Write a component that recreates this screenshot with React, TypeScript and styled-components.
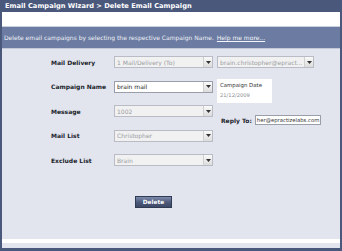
import styled, { createGlobalStyle } from 'styled-components';

const GlobalStyle = createGlobalStyle`
  html, body {
    margin: 0;
    padding: 0;
    background: #ffffff;
  }
  body {
    font-family: "DejaVu Sans", Verdana, sans-serif;
  }
`;

const Frame = styled.div`
  width: 342px;
  height: 251px;
  box-sizing: border-box;
  background: #4a587c;
  padding: 0 2px 3px;
  display: flex;
  flex-direction: column;
`;

const TitleBar = styled.div`
  height: 12px;
  padding-left: 3px;
  display: flex;
  align-items: center;
  color: #ffffff;
  font-size: 6.7px;
  font-weight: bold;
`;

const Strip = styled.div<{ h: number; color: string }>`
  height: ${({ h }) => h}px;
  flex: none;
  background: ${({ color }) => color};
`;

const InfoBand = styled.div`
  height: 21px;
  background: #6b7ba1;
  color: #eef1f8;
  font-size: 6px;
  padding-left: 2px;
  display: flex;
  align-items: center;
  gap: 3px;
`;

const HelpLink = styled.a`
  color: #f4f6fb;
  text-decoration: underline;
`;

const Panel = styled.div`
  height: 190px;
  flex: none;
  background: #e2e5ee;
  display: flex;
  flex-direction: column;
  padding-top: 7px;
  box-sizing: border-box;
`;

const FormGrid = styled.div`
  display: grid;
  grid-template-columns: 59px 99px 105px;
  grid-template-rows: repeat(5, 12px);
  column-gap: 4px;
  row-gap: 12.5px;
  margin-left: 49px;
`;

const Label = styled.div`
  font-size: 6px;
  font-weight: bold;
  color: #1a1e2a;
  display: flex;
  align-items: center;
  height: 12px;
  white-space: nowrap;
`;

const SelectBox = styled.div<{ disabled?: boolean; w?: number }>`
  width: ${({ w }) => (w ? `${w}px` : '100%')};
  height: 12px;
  box-sizing: border-box;
  border: 1px solid ${({ disabled }) => (disabled ? '#b9bcc4' : '#9a9ea8')};
  background: ${({ disabled }) => (disabled ? '#f1f1f2' : '#ffffff')};
  color: ${({ disabled }) => (disabled ? '#9a9ca2' : '#222222')};
  font-size: 6px;
  display: flex;
  align-items: center;
  padding-left: 2px;
  overflow: hidden;
  white-space: nowrap;
`;

const SelectText = styled.span`
  flex: 1;
  overflow: hidden;
`;

const ArrowButton = styled.span`
  width: 8px;
  height: 10px;
  flex: none;
  background: linear-gradient(#fafafa, #dcdcdc);
  border-left: 1px solid #d0d0d0;
  display: flex;
  align-items: center;
  justify-content: center;
  svg {
    display: block;
  }
`;

const DateBox = styled.div`
  width: 55px;
  height: 24px;
  margin-top: -2px;
  background: #ffffff;
  box-sizing: border-box;
  padding: 3px 0 0 3px;
  display: flex;
  flex-direction: column;
  gap: 4px;
`;

const DateLabel = styled.span`
  font-size: 5.4px;
  color: #333333;
  white-space: nowrap;
`;

const DateValue = styled.span`
  font-size: 5.2px;
  color: #8a8c92;
`;

const ReplyRow = styled.div`
  grid-column: 3;
  grid-row: 3;
  margin-top: 10px;
  margin-left: 4px;
  display: flex;
  align-items: center;
  gap: 3px;
  height: 10px;
  white-space: nowrap;
`;

const ReplyLabel = styled.span`
  flex: none;
  font-size: 6px;
  font-weight: bold;
  color: #1a1e2a;
`;

const TextInput = styled.div`
  flex: none;
  width: 66px;
  height: 10px;
  box-sizing: border-box;
  border: 1px solid #9a9ea8;
  background: #ffffff;
  font-size: 5.3px;
  color: #333333;
  display: flex;
  align-items: center;
  padding-left: 1px;
  overflow: hidden;
`;

const ButtonRow = styled.div`
  margin-top: 23px;
  padding-left: 133px;
`;

const DeleteButton = styled.button`
  width: 37px;
  height: 12px;
  padding: 0;
  border: 1px solid #2f3a55;
  background: linear-gradient(#7d8aab, #4b5879 55%, #3d4965);
  color: #ffffff;
  font-family: "DejaVu Sans", Verdana, sans-serif;
  font-size: 5.8px;
  font-weight: bold;
`;

const Arrow = () => (
  <svg width="5" height="3" viewBox="0 0 5 3">
    <path d="M0 0h5L2.5 3z" fill="#333" />
  </svg>
);

const Select = ({ value, disabled, w }: { value: string; disabled?: boolean; w?: number }) => (
  <SelectBox disabled={disabled} w={w}>
    <SelectText>{value}</SelectText>
    <ArrowButton>
      <Arrow />
    </ArrowButton>
  </SelectBox>
);

export default function App() {
  return (
    <>
      <GlobalStyle />
      <Frame>
        <TitleBar>Email Campaign Wizard &gt; Delete Email Campaign</TitleBar>
        <Strip h={14} color="#ffffff" />
        <Strip h={1} color="#c9cfdd" />
        <InfoBand>
          Delete email campaigns by selecting the respective Campaign Name.
          <HelpLink href="#">Help me more...</HelpLink>
        </InfoBand>
        <Strip h={1} color="#c3c9d9" />
        <Panel>
          <FormGrid>
            <Label>Mail Delivery</Label>
            <Select value="1 Mail/Delivery (To)" disabled />
            <Select value="brain.christopher@epract..." disabled w={97} />

            <Label>Campaign Name</Label>
            <Select value="brain mail" />
            <DateBox>
              <DateLabel>Campaign Date</DateLabel>
              <DateValue>21/12/2009</DateValue>
            </DateBox>

            <Label>Message</Label>
            <Select value="1002" disabled />
            <ReplyRow>
              <ReplyLabel>Reply To:</ReplyLabel>
              <TextInput>her@epractizelabs.com</TextInput>
            </ReplyRow>

            <Label>Mail List</Label>
            <Select value="Christopher" disabled />
            <div />

            <Label>Exclude List</Label>
            <Select value="Brain" disabled />
            <div />
          </FormGrid>
          <ButtonRow>
            <DeleteButton>Delete</DeleteButton>
          </ButtonRow>
        </Panel>
        <Strip h={4} color="#ffffff" />
        <Strip h={5} color="#e2e5ee" />
      </Frame>
    </>
  );
}
